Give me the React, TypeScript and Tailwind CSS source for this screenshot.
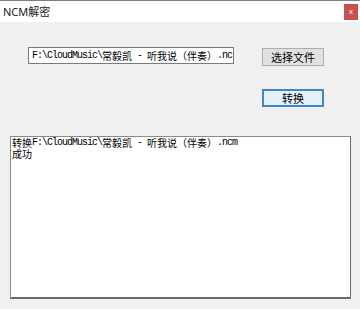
import React from "react";

const isCJK = (c: string) => /[\u3000-\u9fff\uff00-\uffef]/.test(c);

function Mixed({ text }: { text: string }) {
  const runs: { cjk: boolean; s: string }[] = [];
  for (const ch of text) {
    const c = isCJK(ch);
    const last = runs[runs.length - 1];
    if (last && last.cjk === c) last.s += ch;
    else runs.push({ cjk: c, s: ch });
  }
  return (
    <>
      {runs.map((r, i) =>
        r.cjk ? (
          <span key={i} className="inline-block align-top h-[11px] leading-[11px] [font-family:'Noto_Sans_CJK_SC',sans-serif] text-[10px]">
            {r.s}
          </span>
        ) : (
          <span key={i} className="inline-block align-top h-[11px] leading-[11px] [font-family:'Liberation_Mono',monospace] text-[10px] tracking-[-1px] whitespace-pre">
            {r.s}
          </span>
        )
      )}
    </>
  );
}

export default function App() {
  return (
    <div className="w-[360px] h-[309px] bg-[#f0f0f0] overflow-hidden flex flex-col">
      <div className="h-[22px] bg-white border-t border-[#7f7f7f] flex items-center justify-between shrink-0">
        <span className="pl-[3px] text-[11px] text-[#1a1a1a] [font-family:'Noto_Sans','Noto_Sans_CJK_SC',sans-serif] leading-none">
          NCM解密
        </span>
        <div className="w-[14px] h-[16px] bg-[#c75050] mr-[2px] flex items-center justify-center text-white text-[8px] leading-none [font-family:'Liberation_Sans',sans-serif]">
          x
        </div>
      </div>
      <div className="mt-[25px] flex items-start">
        <div className="ml-[28px] w-[206px] h-[17px] bg-white border border-[#7a7a7a] pl-[3px] flex items-center overflow-hidden whitespace-nowrap leading-none text-black">
          <Mixed text="F:\CloudMusic\常毅凯 - 听我说（伴奏）.nc" />
        </div>
        <div className="ml-[28px] mt-[1px] w-[62px] h-[18px] bg-[#e1e1e1] border border-[#adadad] flex items-center justify-center text-[11px] text-black [font-family:'Noto_Sans_CJK_SC',sans-serif] leading-none">
          选择文件
        </div>
      </div>
      <div className="mt-[23px] ml-[262px] w-[62px] h-[18px] bg-[#e5f1fb] border-2 border-[#3f86c8] flex items-center justify-center text-[11px] text-black [font-family:'Noto_Sans_CJK_SC',sans-serif] leading-none">
        转换
      </div>
      <div className="mt-[29px] ml-[10px] w-[341px] h-[163px] bg-white border border-[#8a8a8a] border-r-[#6a6a6a] border-b-2 border-b-[#6a6a6a] pl-[1px] text-black">
        <div className="leading-[11px] h-[11px] whitespace-nowrap">
          <Mixed text="转换F:\CloudMusic\常毅凯 - 听我说（伴奏）.ncm" />
        </div>
        <div className="leading-[11px] h-[11px] whitespace-nowrap">
          <Mixed text="成功" />
        </div>
      </div>
    </div>
  );
}
